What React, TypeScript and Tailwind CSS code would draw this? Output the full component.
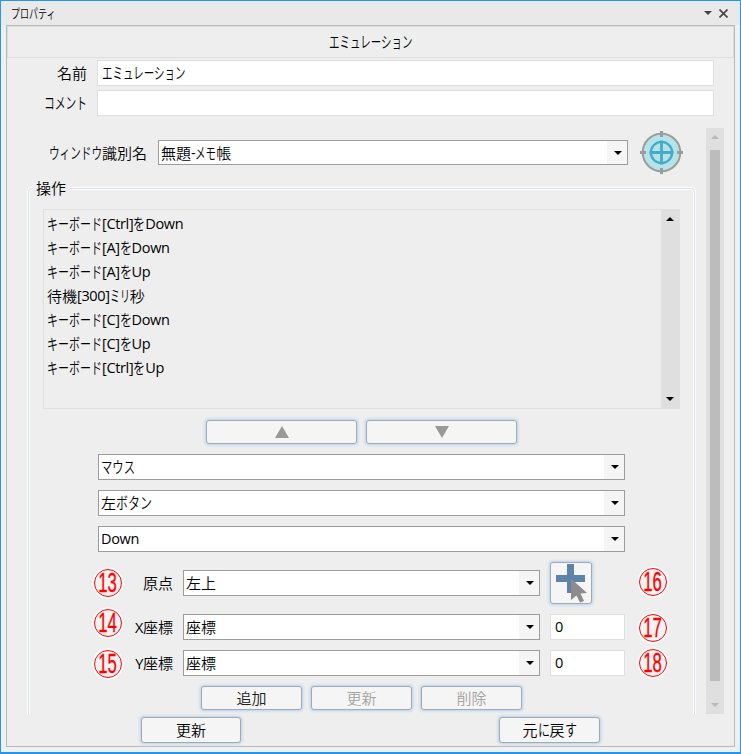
import type { ReactNode } from "react";
import clsx from "clsx";

// Narrow UI kana: squeezes full-width glyphs into the given width
const Kana = ({
  children,
  w,
  size = 15,
}: {
  children: string;
  w: number;
  size?: number;
}) => (
  <span className="inline-block whitespace-nowrap" style={{ width: w }}>
    <span
      className="inline-block origin-left"
      style={{ transform: `scale(${w / (children.length * size)}, 1.06)` }}
    >
      {children}
    </span>
  </span>
);

const Latin = ({ children }: { children: string }) => (
  <span className="font-['Open_Sans',sans-serif] text-[14.5px] font-normal tracking-[-0.35px]">
    {children}
  </span>
);

const ArrowIcon = ({ up, className }: { up?: boolean; className?: string }) => (
  <svg width="8" height="4" viewBox="0 0 8 4" className={className}>
    <path d={up ? "M0 4L4 0L8 4Z" : "M0 0H8L4 4Z"} fill="currentColor" />
  </svg>
);

const TargetIcon = () => (
  <svg width="43" height="43" viewBox="0 0 43 43" fill="none">
    <circle cx="21.5" cy="21.5" r="18.8" fill="#b5e4e8" stroke="#9c9c9c" strokeWidth="2" />
    <path d="M21.5 0V6M21.5 37V43M0 21.5H6M37 21.5H43" stroke="#9c9c9c" strokeWidth="3" />
    <circle cx="21.5" cy="21.5" r="10.6" stroke="#48aacb" strokeWidth="2.4" />
    <path d="M21.5 9.5V33.5M9.5 21.5H33.5" stroke="#48aacb" strokeWidth="2.8" />
  </svg>
);

const PickIcon = () => (
  <svg width="40" height="40" viewBox="0 0 40 40">
    <path d="M16 1H23V12H34V19H23V30H16V19H5V12H16Z" fill="#5d83aa" />
    <path d="M20 15.5L36 30L29.5 30.5L33 38L29 39.5L25.5 32.5L20 37Z" fill="#8c8c8c" />
  </svg>
);

const Combo = ({ children, className }: { children: ReactNode; className: string }) => (
  <div className={clsx("flex shrink-0 border border-[#9c9c9c] bg-white", className)}>
    <div className="flex flex-1 items-center pl-[2px]">{children}</div>
    <div className="flex w-5 items-center justify-center bg-[#f5f5f5] pl-px">
      <ArrowIcon />
    </div>
  </div>
);

const Input = ({ children, className }: { children?: ReactNode; className: string }) => (
  <div className={clsx("flex h-[26px] shrink-0 items-center border border-[#dfdfdf] bg-white pl-1", className)}>
    {children}
  </div>
);

const Button = ({ children, className }: { children: ReactNode; className: string }) => (
  <button
    className={clsx(
      "flex shrink-0 items-center justify-center rounded-[3px] border border-[#a3a9b1] bg-[#f5f5f5] shadow-[0_0_3px_1px_#b5d2f0]",
      className
    )}
  >
    {children}
  </button>
);

const Badge = ({ children, className }: { children: string; className?: string }) => (
  <div
    className={clsx(
      "flex size-7 shrink-0 items-center justify-center rounded-full border border-[#f00] bg-[#f3f3f3] shadow-[0_0_0_1.5px_#fff]",
      className
    )}
  >
    <span className="scale-x-[0.6] font-['Liberation_Sans'] text-[28px] leading-none font-normal text-[#f00] [-webkit-text-stroke:0.3px_#f00]">
      {children}
    </span>
  </div>
);

const steps: { key?: string; action?: string }[] = [
  { key: "[Ctrl]", action: "Down" },
  { key: "[A]", action: "Down" },
  { key: "[A]", action: "Up" },
  {},
  { key: "[C]", action: "Down" },
  { key: "[C]", action: "Up" },
  { key: "[Ctrl]", action: "Up" },
];

export default function App() {
  return (
    <div className="flex h-[754px] w-[741px] flex-col overflow-hidden border border-b-2 border-[#2196f3] bg-[#f0f0f0] font-['Noto_Sans_CJK_JP_DemiLight','Noto_Sans_CJK_JP',sans-serif] text-[15px] leading-[20px] font-[350] text-black">
      {/* Title bar */}
      <div className="flex h-6 shrink-0 items-center bg-[#e9e9e9] pr-3 pl-[10px] text-[12px]">
        <Kana w={45} size={12}>プロパティ</Kana>
        <ArrowIcon className="ml-auto text-[#444]" />
        <svg width="9" height="9" viewBox="0 0 9 9" className="ml-[7px]">
          <path d="M.5 .5L8.5 8.5M8.5 .5L.5 8.5" stroke="#444" strokeWidth="1.6" />
        </svg>
      </div>

      <div className="mx-[5px] flex h-[722px] w-[729px] shrink-0 flex-col border border-[#b9b9b9] bg-[#eee]">
        <div className="flex h-8 shrink-0 items-center justify-center border border-[#dedede]">
          <Kana w={84}>エミュレーション</Kana>
        </div>

        <div className="mt-[2px] flex flex-col gap-1">
          <div className="flex items-center">
            <div className="mr-[10px] w-20 text-right">名前</div>
            <Input className="w-[617px]">
              <Kana w={84}>エミュレーション</Kana>
            </Input>
          </div>
          <div className="flex items-center">
            <div className="mr-[10px] w-20 text-right">
              <Kana w={43}>コメント</Kana>
            </div>
            <Input className="w-[617px]" />
          </div>
        </div>

        {/* Scrolling area */}
        <div className="mt-3 flex h-[586px] shrink-0 overflow-hidden">
          <div className="w-[699px]">
            <div className="mt-[2px] flex h-[45px] items-center">
              <div className="mr-[11px] w-[140px] text-right whitespace-nowrap">
                <Kana w={53}>ウィンドウ</Kana>識別名
              </div>
              <Combo className="h-[25px] w-[470px]">
                無題<Latin>-</Latin>
                <Kana w={21}>メモ</Kana>帳
              </Combo>
              <div className="ml-3">
                <TargetIcon />
              </div>
            </div>

            <div className="mt-[13px] ml-[21px] h-[540px] w-[667px] rounded-[4px] border border-[#d5dfe5] shadow-[0_0_0_1px_#fff,inset_0_0_0_1px_#fff]">
              <div className="relative -mt-[10px] ml-1 h-[18px] w-[37px] bg-[#eee] pl-[3px] leading-[18px]">
                操作
              </div>

              <div className="mt-3 ml-[14px] flex h-[200px] w-[637px] border border-r-0 border-[#dfdfdf]">
                <div className="flex-1 pt-[2px] pl-[3px]">
                  {steps.map((s, i) => (
                    <div key={i} className="flex h-6 items-center">
                      {s.key ? (
                        <>
                          <Kana w={55}>キーボード</Kana>
                          <Latin>{s.key}</Latin>
                          <Kana w={12}>を</Kana>
                          <Latin>{s.action ?? ""}</Latin>
                        </>
                      ) : (
                        <>
                          待機<Latin>[300]</Latin>
                          <Kana w={20}>ミリ</Kana>秒
                        </>
                      )}
                    </div>
                  ))}
                </div>
                <div className="flex w-[19px] flex-col items-center justify-between bg-[#dfdfdf] pt-[7px] pr-px pb-[7px]">
                  <ArrowIcon up />
                  <ArrowIcon />
                </div>
              </div>

              <div className="mt-[11px] ml-[177px] flex gap-[9px]">
                <Button className="h-6 w-[151px]">
                  <svg width="14" height="12" viewBox="0 0 14 12">
                    <path d="M0 12L7 0L14 12Z" fill="#999" />
                  </svg>
                </Button>
                <Button className="h-6 w-[151px]">
                  <svg width="14" height="12" viewBox="0 0 14 12">
                    <path d="M0 0H14L7 12Z" fill="#999" />
                  </svg>
                </Button>
              </div>

              <div className="mt-[10px] ml-[69px] flex flex-col gap-[10px]">
                <Combo className="h-[26px] w-[527px]">
                  <Kana w={34}>マウス</Kana>
                </Combo>
                <Combo className="h-[26px] w-[527px]">
                  左<Kana w={36}>ボタン</Kana>
                </Combo>
                <Combo className="h-[26px] w-[527px]">
                  <Latin>Down</Latin>
                </Combo>
              </div>

              {/* Coordinates */}
              <div className="mt-[10px] ml-[65px] flex flex-col gap-[10px]">
                <div className="flex h-[42px] items-center">
                  <Badge>13</Badge>
                  <div className="mr-[10px] w-[51px] text-right">原点</div>
                  <Combo className="h-[26px] w-[357px]">左上</Combo>
                  <Button className="ml-[10px] size-[42px]">
                    <PickIcon />
                  </Button>
                  <Badge className="ml-[47px] -translate-y-px">16</Badge>
                </div>
                <div className="flex h-[26px] items-center">
                  <Badge className="-translate-y-1">14</Badge>
                  <div className="mr-[10px] w-[51px] text-right"><Latin>X</Latin>座標</div>
                  <Combo className="h-[26px] w-[357px]">座標</Combo>
                  <Input className="ml-[10px] w-[75px]"><Latin>0</Latin></Input>
                  <Badge className="ml-[14px] translate-y-px">17</Badge>
                </div>
                <div className="flex h-[26px] items-center">
                  <Badge className="translate-y-px">15</Badge>
                  <div className="mr-[10px] w-[51px] text-right"><Latin>Y</Latin>座標</div>
                  <Combo className="h-[26px] w-[357px]">座標</Combo>
                  <Input className="ml-[10px] w-[75px]"><Latin>0</Latin></Input>
                  <Badge className="ml-[14px]">18</Badge>
                </div>
              </div>

              <div className="mt-[10px] ml-[172px] flex gap-[9px]">
                <Button className="h-6 w-[101px] text-[#222]">追加</Button>
                <Button className="h-6 w-[101px] text-[#a3a3a3]">更新</Button>
                <Button className="h-6 w-[101px] text-[#a3a3a3]">削除</Button>
              </div>
            </div>
          </div>

          <div className="flex w-[18px] shrink-0 flex-col items-center bg-[#dfdfdf] pt-[7px] pb-[7px] text-[#b9b9b9]">
            <ArrowIcon up />
            <div className="mt-[11px] mb-auto h-[531px] w-[10px] bg-[#bcbcbc]" />
            <ArrowIcon />
          </div>
        </div>

        <div className="mt-[3px] ml-[134px] flex gap-[258px]">
          <Button className="h-[26px] w-[100px]">更新</Button>
          <Button className="h-[26px] w-[101px]">
            元<Kana w={12}>に</Kana>戻<Kana w={12}>す</Kana>
          </Button>
        </div>
      </div>
    </div>
  );
}
